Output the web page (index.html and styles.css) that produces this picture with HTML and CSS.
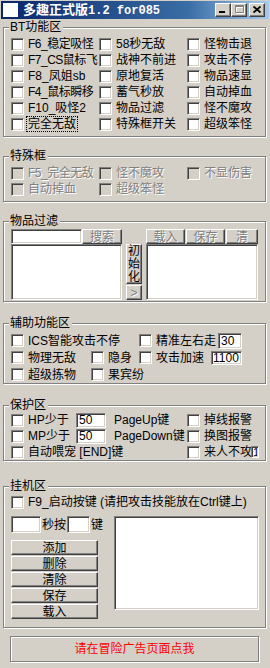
FILE: index.html
```html
<!DOCTYPE html>
<html lang="zh-CN">
    <head>
        <meta charset="UTF-8">
        <title>多趣正式版1.2 for085</title>
        <link rel="stylesheet" href="styles.css">
    </head>
    <body>
        <div class="window">
            <div class="titlebar">
                <span class="app-icon"></span>
                <span class="title"><span class="title-cn">多趣正式版</span><span class="title-en">1.2 for085</span></span>
                <div class="caption-buttons">
                    <button class="btn cap-btn" title="最小化">
                        <svg width="14" height="12" viewBox="0 0 14 12"><rect x="3" y="7" width="6" height="2" fill="#000"/></svg>
                    </button>
                    <button class="btn cap-btn" title="最大化" disabled>
                        <svg width="14" height="12" viewBox="0 0 14 12">
                            <path d="M4.5 2.5h8v7h-8z M4 3.5h9" stroke="#fff" fill="none"/>
                            <path d="M3.5 1.5h8v7h-8z M3 2.5h9" stroke="#808080" fill="none"/>
                        </svg>
                    </button>
                    <button class="btn cap-btn close" title="关闭">
                        <svg width="14" height="12" viewBox="0 0 14 12"><path d="M3.5 2.5l7 6M10.5 2.5l-7 6" stroke="#000" stroke-width="1.7"/></svg>
                    </button>
                </div>
            </div>

            <div class="group group-bt">
                <div class="group-title">BT功能区</div>
                <div class="grid3">
                    <label class="check tight"><span class="box"></span><span>F6_稳定吸怪</span></label>
                    <label class="check"><span class="box"></span><span>58秒无敌</span></label>
                    <label class="check"><span class="box"></span><span>怪物击退</span></label>
                    <label class="check tight"><span class="box"></span><span>F7_CS鼠标飞</span></label>
                    <label class="check"><span class="box"></span><span>战神不前进</span></label>
                    <label class="check"><span class="box"></span><span>攻击不停</span></label>
                    <label class="check"><span class="box"></span><span>F8_凤姐sb</span></label>
                    <label class="check"><span class="box"></span><span>原地复活</span></label>
                    <label class="check"><span class="box"></span><span>物品速显</span></label>
                    <label class="check tight"><span class="box"></span><span>F4_鼠标瞬移</span></label>
                    <label class="check"><span class="box"></span><span>蓄气秒放</span></label>
                    <label class="check"><span class="box"></span><span>自动掉血</span></label>
                    <label class="check"><span class="box"></span><span>F10_吸怪2</span></label>
                    <label class="check"><span class="box"></span><span>物品过滤</span></label>
                    <label class="check"><span class="box"></span><span>怪不魔攻</span></label>
                    <label class="check"><span class="box"></span><span class="focused">完全无敌</span></label>
                    <label class="check"><span class="box"></span><span>特殊框开关</span></label>
                    <label class="check"><span class="box"></span><span>超级笨怪</span></label>
                </div>
            </div>

            <div class="group group-special">
                <div class="group-title">特殊框</div>
                <div class="grid3">
                    <label class="check disabled tight"><span class="box"></span><span>F5_完全无敌</span></label>
                    <label class="check disabled"><span class="box"></span><span>怪不魔攻</span></label>
                    <label class="check disabled"><span class="box"></span><span>不显伤害</span></label>
                    <label class="check disabled"><span class="box"></span><span>自动掉血</span></label>
                    <label class="check disabled"><span class="box"></span><span>超级笨怪</span></label>
                </div>
            </div>

            <div class="group group-filter">
                <div class="group-title">物品过滤</div>
                <div class="filter">
                    <div class="filter-col filter-left">
                        <div class="filter-bar">
                            <input class="field search" type="text">
                            <button class="btn btn-search" disabled>搜索</button>
                        </div>
                        <div class="field listbox"></div>
                    </div>
                    <div class="filter-mid">
                        <button class="btn btn-init">初始化</button>
                        <button class="btn btn-arrow" disabled>&gt;</button>
                    </div>
                    <div class="filter-col filter-right">
                        <div class="filter-bar">
                            <button class="btn btn-load" disabled>载入</button>
                            <button class="btn btn-save" disabled>保存</button>
                            <button class="btn btn-clear" disabled>清</button>
                        </div>
                        <div class="field listbox"></div>
                    </div>
                </div>
            </div>

            <div class="group group-assist">
                <div class="group-title">辅助功能区</div>
                <div class="row17">
                    <label class="check w128"><span class="box"></span><span>ICS智能攻击不停</span></label>
                    <label class="check w79"><span class="box"></span><span>精准左右走</span></label>
                    <input class="field num num-walk" type="text" value="30">
                </div>
                <div class="row17">
                    <label class="check w80"><span class="box"></span><span>物理无敌</span></label>
                    <label class="check w48"><span class="box"></span><span>隐身</span></label>
                    <label class="check w72"><span class="box"></span><span>攻击加速</span></label>
                    <input class="field num num-speed" type="text" value="1100">
                </div>
                <div class="row17">
                    <label class="check w80"><span class="box"></span><span>超级拣物</span></label>
                    <label class="check"><span class="box"></span><span>果宾纷</span></label>
                </div>
            </div>

            <div class="group group-protect">
                <div class="group-title">保护区</div>
                <div class="row16">
                    <label class="check w65"><span class="box"></span><span>HP少于</span></label>
                    <input class="field num num-hp" type="text" value="50">
                    <span class="key-text">PageUp键</span>
                    <label class="check"><span class="box"></span><span>掉线报警</span></label>
                </div>
                <div class="row16">
                    <label class="check w65"><span class="box"></span><span>MP少于</span></label>
                    <input class="field num num-hp" type="text" value="50">
                    <span class="key-text">PageDown键</span>
                    <label class="check"><span class="box"></span><span>换图报警</span></label>
                </div>
                <div class="row16">
                    <label class="check w176"><span class="box"></span><span>自动喂宠 [END]键</span></label>
                    <label class="check w64 clip"><span class="box"></span><span>来人不攻</span></label>
                    <input class="field num num-one" type="text" value="1">
                </div>
            </div>

            <div class="group group-afk">
                <div class="group-title">挂机区</div>
                <label class="check"><span class="box"></span><span>F9_启动按键 (请把攻击技能放在Ctrl键上)</span></label>
                <div class="afk">
                    <div class="afk-left">
                        <div class="afk-keys">
                            <input class="field num num-sec" type="text">
                            <span class="afk-label">秒按</span>
                            <input class="field num num-key" type="text">
                            <span class="afk-label">键</span>
                        </div>
                        <div class="afk-buttons">
                            <button class="btn">添加</button>
                            <button class="btn">删除</button>
                            <button class="btn">清除</button>
                            <button class="btn">保存</button>
                            <button class="btn">载入</button>
                        </div>
                    </div>
                    <div class="field afk-list"></div>
                </div>
            </div>

            <div class="ad-box">请在冒险广告页面点我</div>
        </div>
    </body>
</html>
```

FILE: styles.css
```css
* {
    box-sizing: border-box;
}

body {
    margin: 0;
    background: #d4d0c8;
    color: #000;
    font-family: "Liberation Sans", "Noto Sans CJK SC", sans-serif;
    font-size: 12px;
    line-height: 14px;
}

.window {
    width: 270px;
    height: 668px;
    padding-top: 1px;
    background: #d4d0c8;
    overflow: hidden;
}

/* title bar */
.titlebar {
    height: 18px;
    margin: 0 1px;
    padding: 0 4px 0 2px;
    display: flex;
    align-items: center;
    background: linear-gradient(to right, #0a246a, #3a6ea5 70%, #a6caf0);
    color: #fff;
    font-weight: bold;
}

.app-icon {
    width: 15px;
    height: 14px;
    margin-right: 5px;
    background: #fff;
}

.title-cn {
    font-size: 13px;
}

.title-en {
    font-family: "Liberation Mono", monospace;
    font-size: 12px;
}

.caption-buttons {
    margin-left: auto;
    display: flex;
}

/* win98 bevels */
.btn {
    font: inherit;
    color: #000;
    padding: 0;
    border-radius: 0;
    background: #d4d0c8;
    border: 1px solid;
    border-color: #fff #404040 #404040 #fff;
    box-shadow: inset -1px -1px #808080;
    display: flex;
    align-items: center;
    justify-content: center;
}

.btn:disabled {
    color: #808080;
    text-shadow: 1px 1px #fff;
}

.field {
    font: inherit;
    border-radius: 0;
    outline: none;
    padding: 0 2px;
    background: #fff;
    border: 1px solid;
    border-color: #808080 #fff #fff #808080;
    box-shadow: inset 1px 1px #404040, inset -1px -1px #d4d0c8;
}

.cap-btn {
    width: 16px;
    height: 14px;
}

.cap-btn.close {
    margin-left: 2px;
}

/* group boxes */
.group {
    margin: 19px 4px 0 3px;
    padding: 0 0 4px 7px;
    border: 1px solid #808080;
    box-shadow: inset 1px 1px #fff, 1px 1px #fff;
}

.group-title {
    width: fit-content;
    margin: -8px 0 2px -2px;
    padding: 0 2px 0 1px;
    background: #d4d0c8;
}

.group-bt { margin-top: 8px; }
.group-filter { padding-bottom: 1px; }
.group-filter .group-title { margin-bottom: 1px; }
.group-assist { margin-top: 21px; padding-bottom: 0; }
.group-protect { margin-top: 21px; padding-bottom: 0; }
.group-protect .group-title { margin-bottom: 0; }
.group-afk { margin-top: 25px; padding-bottom: 8px; }
.group-afk .group-title { margin-bottom: 1px; }

/* checkboxes */
.check {
    height: 16px;
    display: flex;
    align-items: center;
    white-space: nowrap;
    flex: none;
}

.check.tight {
    letter-spacing: -0.5px;
}

.check .box {
    width: 13px;
    height: 13px;
    margin-right: 4px;
    flex: none;
    background: #fff;
    border: 1px solid;
    border-color: #808080 #fff #fff #808080;
    box-shadow: inset 1px 1px #404040, inset -1px -1px #d4d0c8;
}

.check.disabled {
    color: #808080;
    text-shadow: 1px 1px #fff;
}

.check.disabled .box {
    background: #d4d0c8;
}

.focused {
    outline: 1px dotted #000;
    padding: 0 1px;
    margin-left: -1px;
}

.grid3 {
    display: grid;
    grid-template-columns: 88px 88px 1fr;
    grid-auto-rows: 16px;
}

/* item filter */
.filter {
    display: flex;
    gap: 4px;
}

.filter-col {
    display: flex;
    flex-direction: column;
}

.filter-left { width: 111px; }
.filter-right { width: 112px; }

.filter-bar {
    height: 15px;
    display: flex;
}

.search {
    width: 71px;
    height: 15px;
}

.btn-search {
    width: 40px;
    height: 15px;
}

.btn-load,
.btn-save {
    width: 39px;
    height: 15px;
    margin-right: 1px;
}

.btn-clear {
    width: 32px;
    height: 15px;
}

.listbox {
    height: 56px;
}

.filter-mid {
    width: 16px;
    padding-top: 15px;
    display: flex;
    flex-direction: column;
    gap: 1px;
}

.btn-init {
    height: 40px;
    line-height: 13px;
    word-break: break-all;
}

.btn-arrow {
    height: 15px;
}

/* rows */
.row17,
.row16 {
    display: flex;
    align-items: center;
}

.row17 { height: 17px; }
.row16 { height: 16px; }

.w48 { width: 48px; }
.w64 { width: 64px; }
.w65 { width: 65px; }
.w72 { width: 72px; }
.w79 { width: 79px; }
.w80 { width: 80px; }
.w128 { width: 128px; }
.w176 { width: 176px; }

.clip { overflow: hidden; }

.num {
    height: 15px;
    line-height: 13px;
    flex: none;
}

.num-walk { width: 24px; height: 16px; }
.num-speed { width: 31px; height: 14px; padding: 0 1px; }
.num-hp { width: 30px; }
.num-one { width: 8px; height: 12px; padding: 0 1px; line-height: 10px; font-size: 11px; }

.key-text {
    width: 81px;
    padding-left: 8px;
    white-space: nowrap;
    flex: none;
}

/* afk */
.afk {
    margin-top: 6px;
    display: flex;
    gap: 16px;
}

.afk-left {
    width: 87px;
    flex: none;
}

.afk-keys {
    height: 17px;
    display: flex;
    align-items: center;
    margin-bottom: 7px;
    white-space: nowrap;
}

.afk-label {
    flex: none;
}

.num-sec { width: 30px; height: 17px; margin-right: 1px; }
.num-key { width: 23px; height: 17px; margin: 0 1px; }

.afk-buttons {
    display: flex;
    flex-direction: column;
    gap: 1px;
}

.afk-buttons .btn {
    height: 15px;
}

.afk-list {
    width: 145px;
    height: 94px;
    flex: none;
}

.ad-box {
    height: 26px;
    margin: 8px 11px 0 10px;
    display: flex;
    align-items: center;
    justify-content: center;
    border: 1px solid #808080;
    box-shadow: inset 1px 1px #fff, 1px 1px #fff;
    color: #f00;
}
```
